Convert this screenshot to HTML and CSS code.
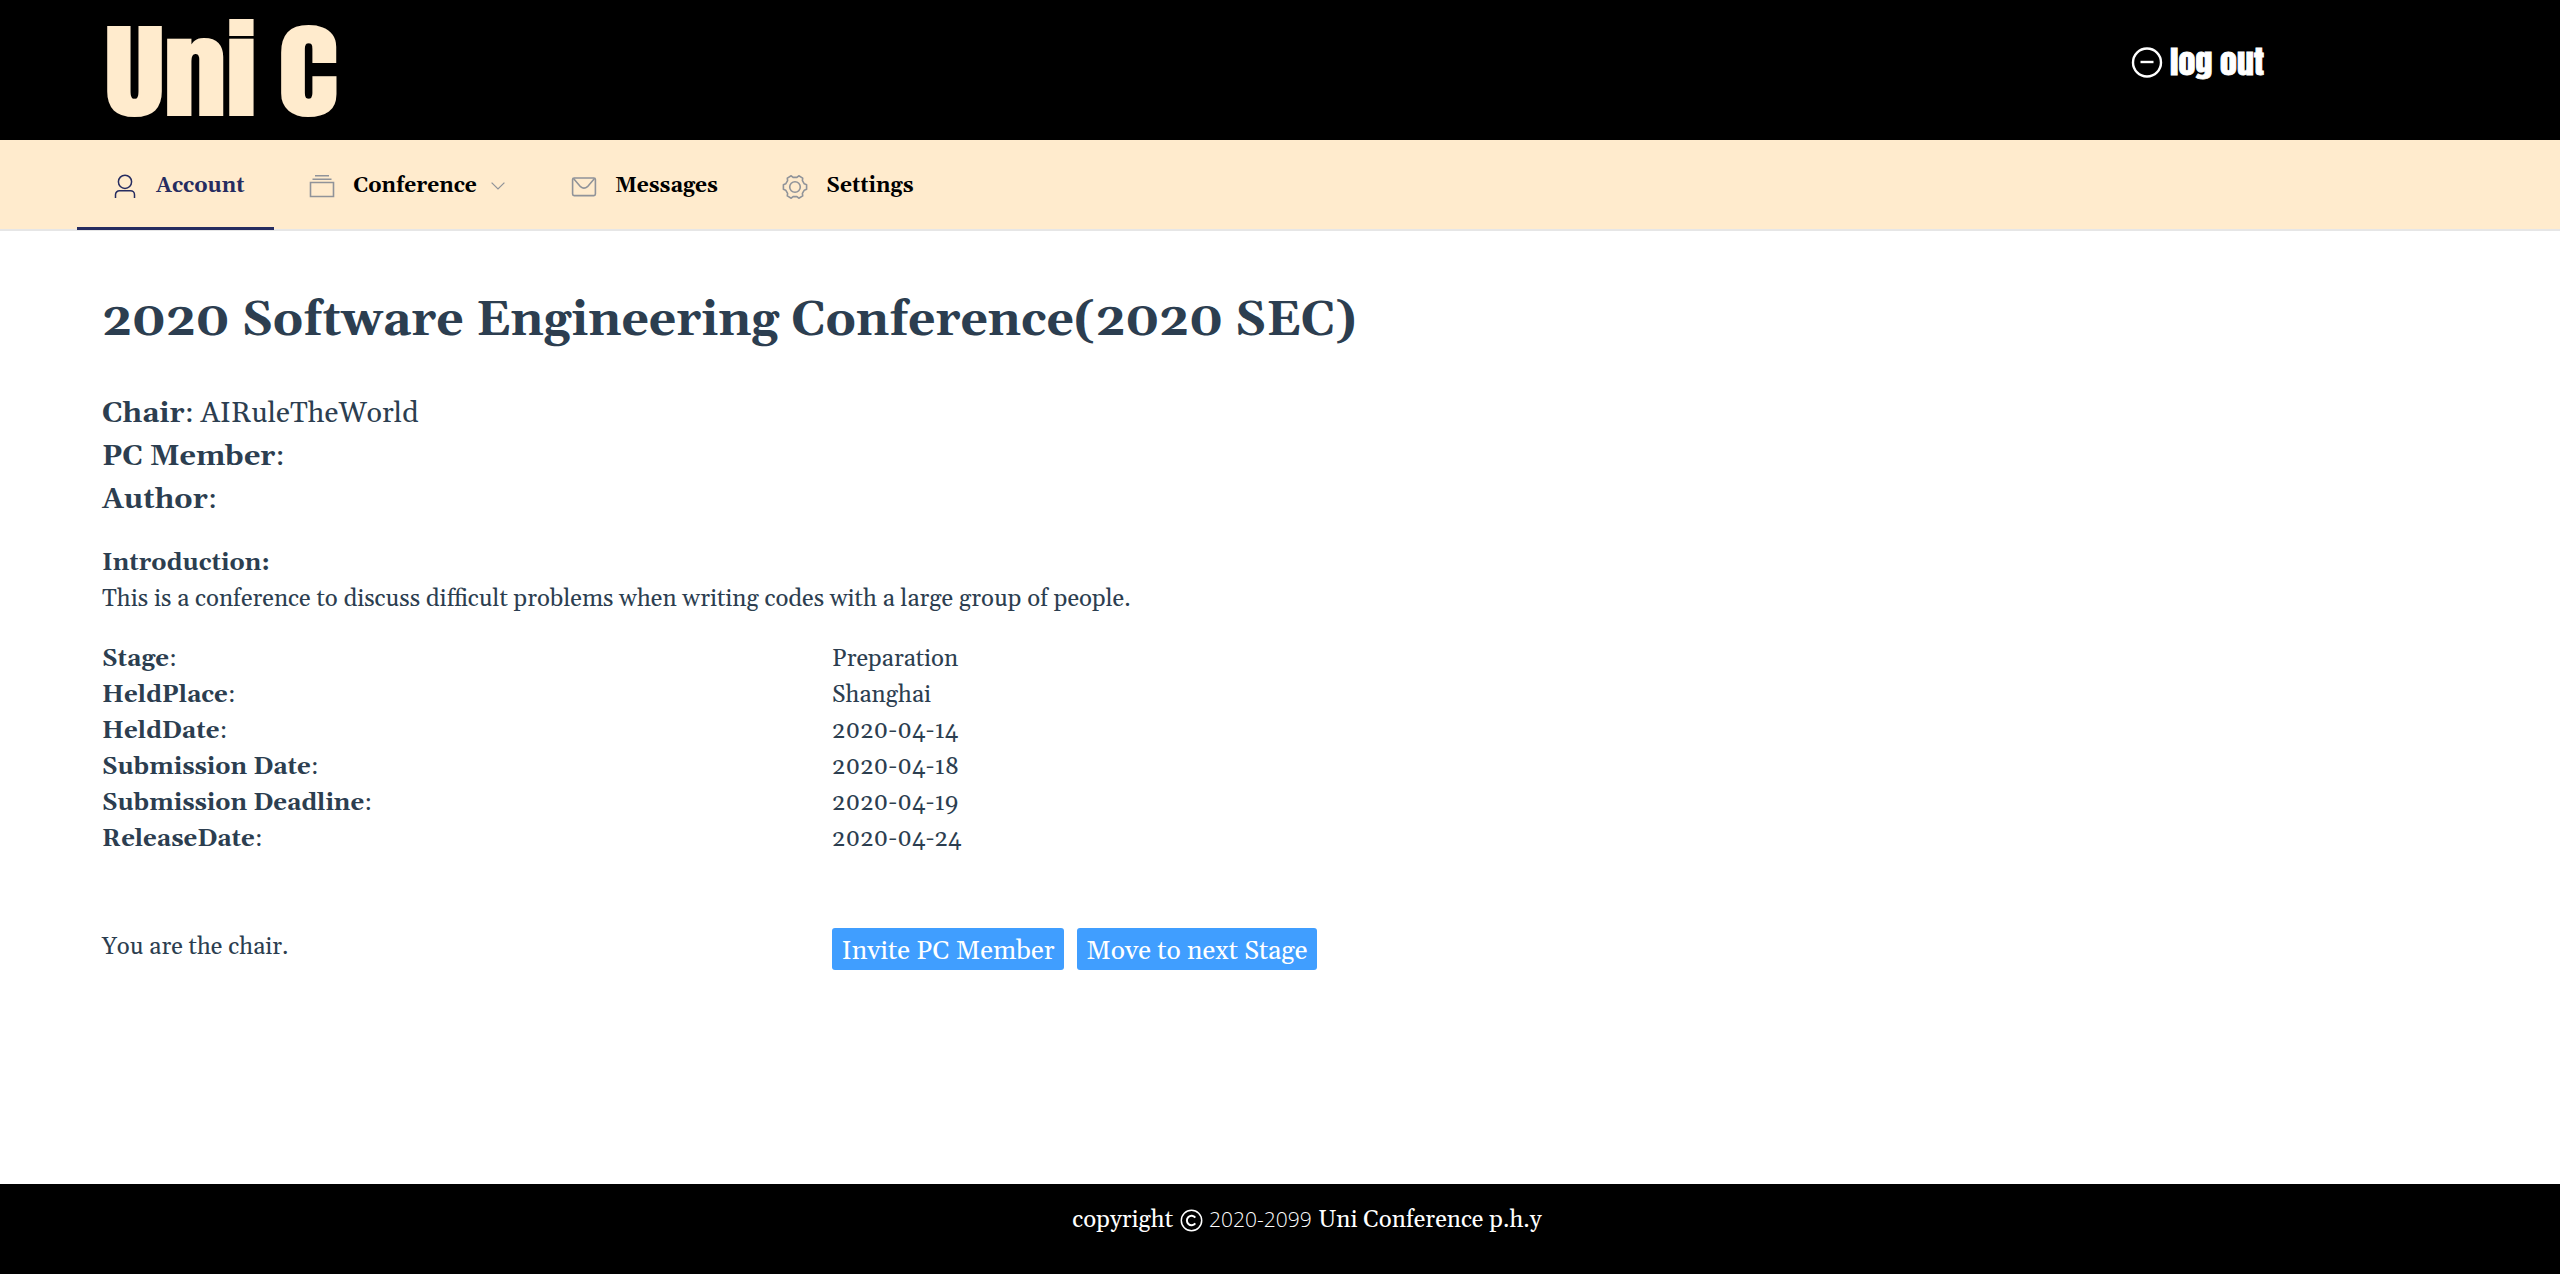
FILE: index.html
```html
<!DOCTYPE html>
<html lang="en">
<head>
  <meta charset="utf-8">
  <title>Uni C</title>
  <link rel="stylesheet" href="styles.css">
</head>
<body>
  <header class="header">
    <div class="logo">Uni C</div>
    <a class="logout">
      <svg class="logout-icon" viewBox="0 0 32 32" fill="none" stroke="currentColor" stroke-width="2.4"><circle cx="16" cy="16.5" r="14"/><path d="M9.5 16h13"/></svg>
      <span class="logout-label">log out</span>
    </a>
  </header>

  <nav class="nav">
    <a class="nav-item active">
      <svg class="nav-icon" viewBox="0 0 26 26" fill="none" stroke="currentColor" stroke-width="1.5"><circle cx="13" cy="8.8" r="6.6"/><path d="M3.5 25v-3.3a4 4 0 0 1 4-4h11a4 4 0 0 1 4 4V25"/></svg>
      <span>Account</span>
    </a>
    <a class="nav-item">
      <svg class="nav-icon" viewBox="0 0 26 26" fill="none" stroke="currentColor" stroke-width="1.6"><path d="M6 2.8h14M3.5 6.3h19M1.5 9.5h23v14h-23z"/></svg>
      <span>Conference</span>
      <svg class="nav-arrow" viewBox="0 0 14 8" fill="none" stroke="currentColor" stroke-width="1.2"><path d="M.6.6 7 7 13.4.6"/></svg>
    </a>
    <a class="nav-item">
      <svg class="nav-icon" viewBox="0 0 26 26" fill="none" stroke="currentColor" stroke-width="1.6"><rect x="1.6" y="5" width="22.800" height="17.600" rx="1.500"/><path d="M2.500 5.500l7 8.200q3.500 3 7 0l7-8.200"/></svg>
      <span>Messages</span>
    </a>
    <a class="nav-item">
      <svg class="nav-icon" viewBox="0 -1 26 26" fill="none" stroke="currentColor" stroke-width="1.6" stroke-linejoin="round"><circle cx="13" cy="13" r="5.3"/><path d="M24.600 10.750V15.250L22.300 16.200L20.400 19.400L20.700 21.900L16.800 24.200L14.900 22.600H11.100L9.200 24.200L5.300 21.900L5.600 19.400L3.700 16.200L1.400 15.250V10.750L3.700 9.800L5.600 6.600L5.300 4.100L9.200 1.800L11.100 3.400H14.900L16.800 1.800L20.700 4.100L20.400 6.600L22.300 9.800Z"/></svg>
      <span>Settings</span>
    </a>
  </nav>

  <main class="main">
    <h1 class="title">2020 Software Engineering Conference(2020 SEC)</h1>
    <section class="people">
      <div><b>Chair</b>: AIRuleTheWorld</div>
      <div><b>PC Member</b>:</div>
      <div><b>Author</b>:</div>
    </section>
    <section class="intro">
      <div><b>Introduction:</b></div>
      <div>This is a conference to discuss difficult problems when writing codes with a large group of people.</div>
    </section>
    <section class="details">
      <div><b>Stage</b>:</div><div>Preparation</div>
      <div><b>HeldPlace</b>:</div><div>Shanghai</div>
      <div><b>HeldDate</b>:</div><div>2020-04-14</div>
      <div><b>Submission Date</b>:</div><div>2020-04-18</div>
      <div><b>Submission Deadline</b>:</div><div>2020-04-19</div>
      <div><b>ReleaseDate</b>:</div><div>2020-04-24</div>
    </section>
    <section class="actions">
      <div class="role">You are the chair.</div>
      <div class="buttons">
        <button class="button">Invite PC Member</button>
        <button class="button">Move to next Stage</button>
      </div>
    </section>
  </main>

  <footer class="footer">
    <span>copyright</span>
    <svg class="copyright-icon" viewBox="0 0 23 23" fill="none" stroke="currentColor" stroke-width="1.5"><circle cx="11.5" cy="11.5" r="10.2"/><path d="M15.3 8.6a4.700 4.700 0 1 0 0 5.800" stroke-width="2"/></svg>
    <span class="years">2020-2099</span>
    <span>Uni Conference p.h.y</span>
  </footer>
</body>
</html>
```
FILE: styles.css
```css
* {
  box-sizing: border-box;
}

body {
  margin: 0;
  min-height: 1274px;
  display: flex;
  flex-direction: column;
  background: #fff;
  color: #2c3e50;
  font-family: Gelasio, Georgia, "Liberation Serif", serif;
  font-size: 24px;
  line-height: 36px;
}

.header {
  height: 140px;
  padding: 0 296px 0 105px;
  display: flex;
  justify-content: space-between;
  align-items: flex-start;
  background: #000;
  font-family: Anton, Impact, "Liberation Sans", sans-serif;
}

.logo {
  padding-top: 2px;
  color: #ffebcd;
  font-size: 103px;
  line-height: 140px;
  word-spacing: -6px;
  -webkit-text-stroke: 2px #ffebcd;
  transform: scaleX(1.21);
  transform-origin: left;
}

.logout {
  display: flex;
  align-items: center;
  gap: 7px;
  height: 124px;
  color: #fff;
}

.logout-icon {
  width: 32px;
  height: 32px;
}

.logout-label {
  width: 94px;
  font-size: 31px;
  white-space: nowrap;
  -webkit-text-stroke: 0.8px #fff;
  transform: scaleX(1.09);
  transform-origin: left;
}

.nav {
  height: 91px;
  padding-left: 77px;
  display: flex;
  background: #ffebcd;
  border-bottom: 2px solid #e6e6e6;
  color: #000;
  font-size: 21px;
  font-weight: 700;
}

.nav-item {
  height: 90px;
  padding: 2px 29.5px 0 35px;
  display: flex;
  align-items: center;
}

.nav-item.active {
  padding-top: 5px;
  color: #262c60;
  border-bottom: 3px solid #262c60;
}

.nav-icon {
  width: 26px;
  height: 26px;
  margin-right: 18px;
  color: #909399;
}

.active .nav-icon {
  color: #262c60;
}

.nav-arrow {
  width: 14px;
  height: 8px;
  margin: 0 2px 0 14px;
  color: #909399;
}

.main {
  flex: 1;
  padding: 54px 102px 0;
}

.title {
  margin: 0 0 35px;
  font-size: 48px;
  line-height: 72px;
}

.people {
  margin-bottom: 23.4px;
  font-size: 28.8px;
  line-height: 43.2px;
}

.intro {
  margin-bottom: 24px;
}

.details,
.actions {
  display: grid;
  grid-template-columns: 730px 1fr;
}

.actions {
  margin-top: 71px;
}

.role {
  padding-top: 1px;
}

.buttons {
  display: flex;
  gap: 13px;
}

.button {
  height: 42px;
  padding: 6px 9.4px 0;
  border: 0;
  border-radius: 3px;
  background: #409eff;
  color: #fff;
  font-family: inherit;
  font-size: 26.4px;
  line-height: 36px;
}

.footer {
  height: 90px;
  padding: 18px 0 0 54px;
  display: flex;
  justify-content: center;
  align-items: flex-start;
  gap: 6.5px;
  background: #000;
  color: #fff;
}

.copyright-icon {
  width: 23px;
  height: 23px;
  margin-top: 7px;
}

.years {
  margin-top: -1px;
  font-family: "Open Sans", sans-serif;
  font-size: 21px;
  font-weight: 350;
}
```
